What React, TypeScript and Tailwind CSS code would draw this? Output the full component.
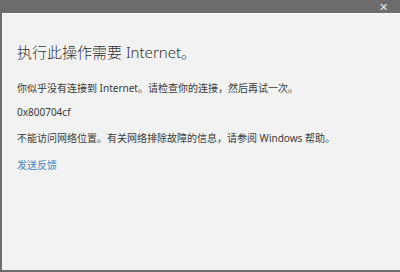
export default function App() {
  return (
    <div
      className="w-[400px] h-[272px] flex flex-col bg-[#6e6b6d] overflow-hidden"
      style={{ fontFamily: '"Noto Sans", "Noto Sans CJK SC", sans-serif' }}
    >
      <div className="h-[13px] flex items-center justify-end pr-[12px]">
        <span className="text-[11px] leading-none text-[#e8e8e8]">✕</span>
      </div>
      <div className="flex-1 ml-[2px] mb-[2px] bg-[#f2f2f2] border-t border-[#fbfbfb] pl-[15px] pt-[27px] text-[#3a3a3a]">
        <h1 className="text-[15px] leading-[22px] font-light text-[#333333]">
          执行此操作需要 Internet。
        </h1>
        <p className="mt-[18px] text-[10px] leading-[14px]">
          你似乎没有连接到 Internet。请检查你的连接，然后再试一次。
        </p>
        <p className="mt-[10px] text-[10px] leading-[14px]">0x800704cf</p>
        <p className="mt-[12px] text-[10px] leading-[14px]">
          不能访问网络位置。有关网络排除故障的信息，请参阅 Windows 帮助。
        </p>
        <p className="mt-[13px] text-[10px] leading-[14px] text-[#3a86c4]">发送反馈</p>
      </div>
    </div>
  );
}
